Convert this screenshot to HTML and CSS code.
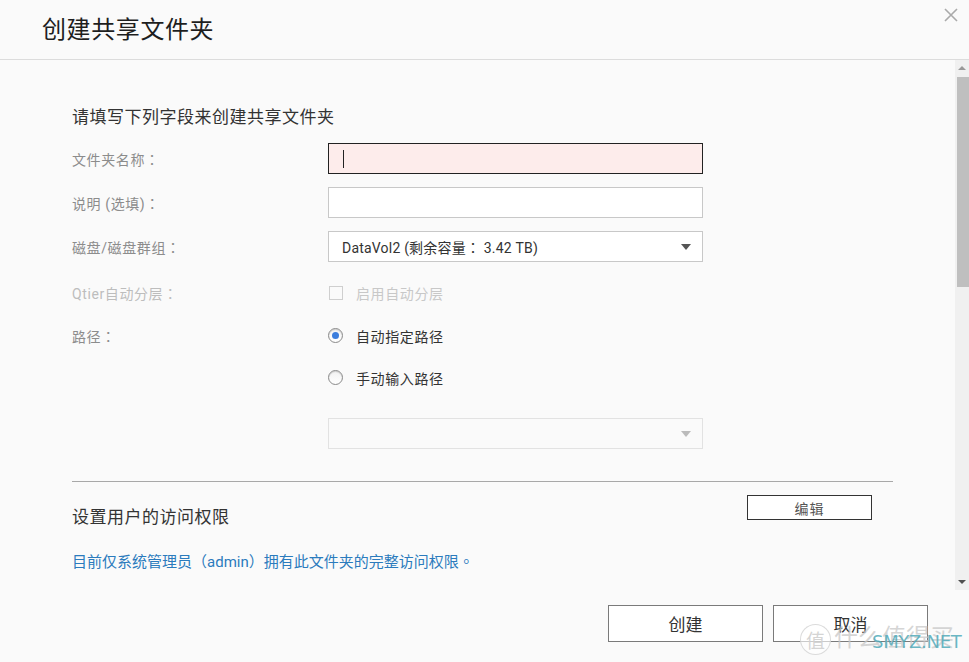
FILE: index.html
```html
<!DOCTYPE html>
<html lang="zh-CN">
<head>
<meta charset="utf-8">
<title>创建共享文件夹</title>
<link rel="stylesheet" href="styles.css">
</head>
<body>
<div class="dialog">
  <div class="header">
    <h1 class="title">创建共享文件夹</h1>
    <svg class="close" width="16" height="16" viewBox="0 0 16 16"><path d="M2 2L14 14M14 2L2 14" stroke="#aaa" stroke-width="1.6" fill="none"/></svg>
  </div>
  <div class="main">
    <div class="content">
      <h2 class="section-title">请填写下列字段来创建共享文件夹</h2>
      <div class="form">
        <div class="row">
          <div class="label">文件夹名称<span class="p" lang="zh-TW">：</span></div>
          <div class="field input active"><span class="caret"></span></div>
        </div>
        <div class="row">
          <div class="label">说明 (选填)<span class="p" lang="zh-TW">：</span></div>
          <div class="field input"></div>
        </div>
        <div class="row">
          <div class="label">磁盘/磁盘群组<span class="p" lang="zh-TW">：</span></div>
          <div class="field select"><span class="select-text">DataVol2 (剩余容量<span class="p" lang="zh-TW">：</span> 3.42 TB)</span><span class="arrow"></span></div>
        </div>
        <div class="row row-check">
          <div class="label disabled">Qtier自动分层<span class="p" lang="zh-TW">：</span></div>
          <div class="option"><span class="checkbox"></span><span class="opt-text disabled-text">启用自动分层</span></div>
        </div>
        <div class="row">
          <div class="label">路径<span class="p" lang="zh-TW">：</span></div>
          <div class="option"><span class="radio checked"></span><span class="opt-text">自动指定路径</span></div>
        </div>
        <div class="row row-radio2">
          <div class="label"></div>
          <div class="option"><span class="radio"></span><span class="opt-text">手动输入路径</span></div>
        </div>
        <div class="row row-last">
          <div class="label"></div>
          <div class="field select disabled-select"><span class="arrow light"></span></div>
        </div>
      </div>
      <div class="divider"></div>
      <div class="perm-row">
        <h2 class="section-title perm-title">设置用户的访问权限</h2>
        <button class="edit-btn">编辑</button>
      </div>
      <p class="perm-note">目前仅系统管理员<span class="p" lang="zh-TW">（</span>admin<span class="p" lang="zh-TW">）</span>拥有此文件夹的完整访问权限<span class="p" lang="zh-TW">。</span></p>
    </div>
    <div class="scrollbar">
      <span class="sb-up"></span>
      <span class="sb-thumb"></span>
      <span class="sb-down"></span>
    </div>
  </div>
  <div class="footer">
    <button class="btn">创建</button>
    <button class="btn">取消</button>
  </div>
  <div class="watermark">
    <span class="wm-zhi">值</span>
    <span class="wm-text">什么值得买</span>
    <span class="wm-net">SMYZ.NET</span>
  </div>
</div>
</body>
</html>
```
FILE: styles.css
```css
* { box-sizing: border-box; }
html, body { margin: 0; padding: 0; }
body {
  width: 969px;
  height: 662px;
  overflow: hidden;
  background: #fafafa;
  font-family: Roboto, "Noto Sans CJK SC", "Noto Sans", sans-serif;
  color: #333;
}
.p { font-family: "Noto Sans CJK TC", sans-serif; }
.dialog { position: relative; width: 969px; height: 662px; }
.header {
  height: 60px;
  border-bottom: 1px solid #dcdcdc;
  display: flex;
  align-items: center;
  padding-left: 42px;
}
.title {
  margin: 0;
  margin-top: -5px;
  font-size: 24px;
  font-weight: normal;
  color: #1e1e1e;
  letter-spacing: 0.6px;
}
.close { position: absolute; left: 943px; top: 7px; }
.main { display: flex; height: 530px; }
.content { flex: 1; padding: 46px 0 0 72px; }
.section-title {
  margin: 0;
  font-size: 17px;
  line-height: 22px;
  font-weight: normal;
  color: #333;
  letter-spacing: 0.5px;
}
.form { display: flex; flex-direction: column; gap: 13px; margin-top: 15px; }
.row { display: flex; align-items: center; height: 31px; }
.row-check { margin-top: 2px; margin-bottom: -1px; }
.row-radio2 { margin-top: -2px; }
.row-last { margin-top: 12px; }
.label {
  width: 256px;
  font-size: 14px;
  letter-spacing: 0.6px;
  color: #8c8c8c;
}
.label.disabled { color: #bdbdbd; }
.field {
  width: 375px;
  height: 31px;
  border: 1px solid #c8c8c8;
  background: #fff;
  display: flex;
  align-items: center;
}
.input.active { border-color: #222; background: #fdeceb; padding-left: 14px; }
.caret { width: 1px; height: 18px; background: #222; }
.select { padding: 0 11px 0 13px; justify-content: space-between; }
.select-text { font-size: 14px; color: #333; letter-spacing: 0.2px; }
.arrow {
  margin-left: auto;
  width: 0; height: 0;
  border-left: 5px solid transparent;
  border-right: 5px solid transparent;
  border-top: 6px solid #555;
}
.arrow.light { border-top-color: #bbb; }
.disabled-select { background: #fafafa; border-color: #e2e2e2; }
.option { display: flex; align-items: center; }
.checkbox {
  width: 14px; height: 14px;
  border: 1px solid #cfcfcf;
  background: #fafafa;
  margin-left: 1px;
}
.opt-text { margin-left: 13px; font-size: 14px; letter-spacing: 0.6px; color: #333; }
.disabled-text { color: #c8c8c8; }
.radio {
  width: 15px; height: 15px;
  border-radius: 50%;
  border: 1px solid #8a8a8a;
  background: linear-gradient(#f2f2f2, #ffffff);
  box-shadow: inset 0 1px 1px rgba(0,0,0,0.15);
  display: flex; align-items: center; justify-content: center;
}
.radio.checked::after {
  content: "";
  width: 7px; height: 7px;
  border-radius: 50%;
  background: #3b7ddd;
}
.divider { width: 821px; height: 1px; background: #a8a8a8; margin-top: 32px; }
.perm-row { display: flex; align-items: flex-start; width: 821px; margin-top: 13px; }
.perm-title { margin-top: 11px; }
.edit-btn {
  margin-left: auto;
  margin-right: 21px;
  width: 125px; height: 25px;
  border: 1px solid #333;
  background: #fff;
  font-family: inherit;
  font-size: 14px;
  color: #555;
  letter-spacing: 1px;
  padding: 0;
}
.perm-note {
  margin: 23px 0 0;
  font-size: 15px;
  line-height: 20px;
  color: #2b7bbd;
  letter-spacing: 0;
}
.scrollbar {
  position: relative;
  width: 14px;
  height: 530px;
  background: #f0f0f0;
}
.sb-up {
  position: absolute; left: 3px; top: 6px;
  width: 0; height: 0;
  border-left: 4px solid transparent;
  border-right: 4px solid transparent;
  border-bottom: 4px solid #999;
}
.sb-thumb { position: absolute; left: 2px; top: 17px; width: 12px; height: 210px; background: #bfbfbf; }
.sb-down {
  position: absolute; left: 3px; top: 520px;
  width: 0; height: 0;
  border-left: 4px solid transparent;
  border-right: 4px solid transparent;
  border-top: 4px solid #505050;
}
.footer {
  display: flex;
  justify-content: flex-end;
  gap: 10px;
  padding: 15px 41px 0 0;
}
.btn {
  width: 155px; height: 37px;
  border: 1px solid #7a7a7a;
  background: #fff;
  font-family: inherit;
  font-size: 17px;
  color: #333;
  padding: 0;
}
.watermark { position: absolute; left: 0; top: 0; width: 0; height: 0; pointer-events: none; }
.wm-zhi {
  position: absolute; left: 800px; top: 624px;
  width: 31px; height: 31px; border-radius: 50%;
  border: 1.5px solid rgba(215,215,215,0.9);
  background: rgba(255,255,255,0.6);
  display: flex; align-items: center; justify-content: center;
  font-size: 19px; line-height: 1; color: rgba(210,210,210,0.95);
  font-family: "Noto Sans CJK SC", sans-serif;
}
.wm-text {
  position: absolute; left: 834px; top: 622px;
  font-size: 24px; line-height: 28px; white-space: nowrap;
  color: rgba(200,200,200,0.75);
  font-family: "Noto Sans CJK SC", sans-serif;
}
.wm-net {
  position: absolute; left: 872px; top: 632px;
  font-size: 18px; line-height: 20px; white-space: nowrap;
  color: rgba(80,170,185,0.85);
  font-family: "DejaVu Sans", sans-serif;
  letter-spacing: -0.3px;
}
```
